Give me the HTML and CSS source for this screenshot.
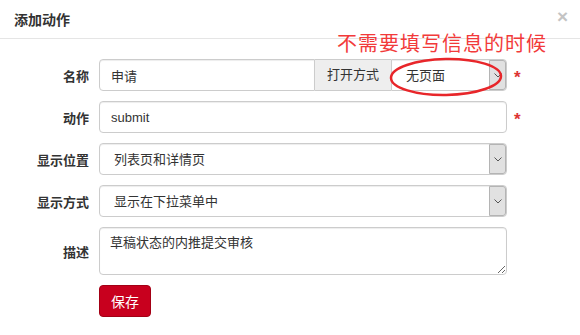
FILE: index.html
```html
<!DOCTYPE html>
<html>
<head>
    <meta charset="utf-8" />
    <title>添加动作</title>
    <link rel="stylesheet" href="styles.css">
</head>
<body>
<div class="modal">
    <!-- header -->
    <div class="modal-header">
        <h4>添加动作</h4>
        <span class="close">&times;</span>
    </div>

    <form class="modal-body">
        <div class="form-row">
            <label for="name">名称</label>
            <div class="input-group">
                <input id="name" class="form-input grow" type="text" value="申请" />
                <span class="addon">打开方式</span>
                <div class="select last">
                    <select><option>无页面</option></select>
                    <span class="arrow"><svg width="8" height="5" viewBox="0 0 8 5"><path d="M0.5 0.5 L4 4 L7.5 0.5" fill="none" stroke="#555" stroke-width="1"/></svg></span>
                </div>
            </div>
            <span class="required">*</span>
        </div>

        <div class="form-row">
            <label for="action">动作</label>
            <input id="action" class="form-input control" type="text" value="submit" />
            <span class="required">*</span>
        </div>

        <div class="form-row">
            <label>显示位置</label>
            <div class="select control">
                <select><option>列表页和详情页</option></select>
                <span class="arrow"><svg width="8" height="5" viewBox="0 0 8 5"><path d="M0.5 0.5 L4 4 L7.5 0.5" fill="none" stroke="#555" stroke-width="1"/></svg></span>
            </div>
        </div>

        <div class="form-row">
            <label>显示方式</label>
            <div class="select control">
                <select><option>显示在下拉菜单中</option></select>
                <span class="arrow"><svg width="8" height="5" viewBox="0 0 8 5"><path d="M0.5 0.5 L4 4 L7.5 0.5" fill="none" stroke="#555" stroke-width="1"/></svg></span>
            </div>
        </div>

        <div class="form-row">
            <label for="desc">描述</label>
            <textarea id="desc" class="form-input control textarea">草稿状态的内推提交审核</textarea>
        </div>

        <div class="form-row">
            <span class="spacer"></span>
            <button type="button" class="btn-save">保存</button>
        </div>
    </form>

    <!-- annotation drawn on top of the screenshot -->
    <div class="note">不需要填写信息的时候</div>
    <svg class="note-ring" width="120" height="44" viewBox="0 0 120 44">
        <ellipse cx="58" cy="21" rx="55" ry="18" fill="none" stroke="#e8262a" stroke-width="2.5" transform="rotate(-1 58 21)"/>
    </svg>
</div>
</body>
</html>
```

FILE: styles.css
```css
body {
    margin: 0;
    background: #fff;
    font-family: "Liberation Sans", "Noto Sans CJK SC", sans-serif;
    font-size: 13px;
    color: #333;
}
.modal {
    position: relative;
    width: 580px;
    height: 335px;
}
.modal-header {
    display: flex;
    justify-content: space-between;
    align-items: center;
    height: 38px;
    padding: 0 14px;
    border-bottom: 1px solid #e5e5e5;
}
.modal-header h4 {
    margin: 0;
    font-size: 14px;
    font-weight: bold;
}
.close {
    font-size: 19px;
    font-weight: bold;
    color: #c4c4c4;
    line-height: 1;
    margin-right: -2px;
    margin-top: -6px;
}
.modal-body {
    display: flex;
    flex-direction: column;
    gap: 10px;
    padding-top: 20px;
}
.form-row {
    display: flex;
    align-items: center;
}
.form-row label,
.spacer {
    width: 89px;
    margin-right: 10px;
    text-align: right;
    font-weight: bold;
}
.form-input {
    box-sizing: border-box;
    height: 32px;
    padding: 6px 11px;
    border: 1px solid #ccc;
    border-radius: 4px;
    box-shadow: inset 0 1px 1px rgba(0, 0, 0, .075);
    font: inherit;
    color: #333;
}
.control {
    width: 408px;
}
.input-group {
    display: flex;
    width: 408px;
}
.input-group .grow {
    flex: 1;
    min-width: 0;
    border-radius: 4px 0 0 4px;
}
.addon {
    box-sizing: border-box;
    width: 76px;
    height: 32px;
    line-height: 30px;
    text-align: center;
    background: #eee;
    border: 1px solid #ccc;
    border-left: none;
    border-right: none;
}
.select {
    box-sizing: border-box;
    display: flex;
    height: 32px;
    border: 1px solid #ccc;
    border-radius: 4px;
    background: #fff;
    box-shadow: inset 0 1px 1px rgba(0, 0, 0, .075);
}
.select.last {
    width: 116px;
    border-radius: 0 4px 4px 0;
}
.select select {
    flex: 1;
    min-width: 0;
    appearance: none;
    border: none;
    background: transparent;
    padding: 0 14px;
    font: inherit;
    color: #333;
}
.arrow {
    display: flex;
    align-items: center;
    justify-content: center;
    width: 15px;
    margin: 0;
    background: #e1e1e1;
    border: 1px solid #b4b4b4;
    border-radius: 0 3px 3px 0;
}
.required {
    margin-left: 7px;
    margin-top: 6px;
    color: #d33;
    font-size: 17px;
    font-weight: bold;
}
.textarea {
    height: 48px;
    padding: 4px 10px;
    resize: vertical;
}
.btn-save {
    height: 32px;
    padding: 0 11px;
    background: #c8001e;
    border: 1px solid #a30015;
    border-radius: 4px;
    color: #fff;
    font: inherit;
    font-size: 14px;
}
.note {
    position: absolute;
    left: 337px;
    top: 32px;
    color: #f23a3a;
    font-size: 20px;
    letter-spacing: 1px;
    line-height: 24px;
}
.note-ring {
    position: absolute;
    left: 388px;
    top: 56px;
}
```
